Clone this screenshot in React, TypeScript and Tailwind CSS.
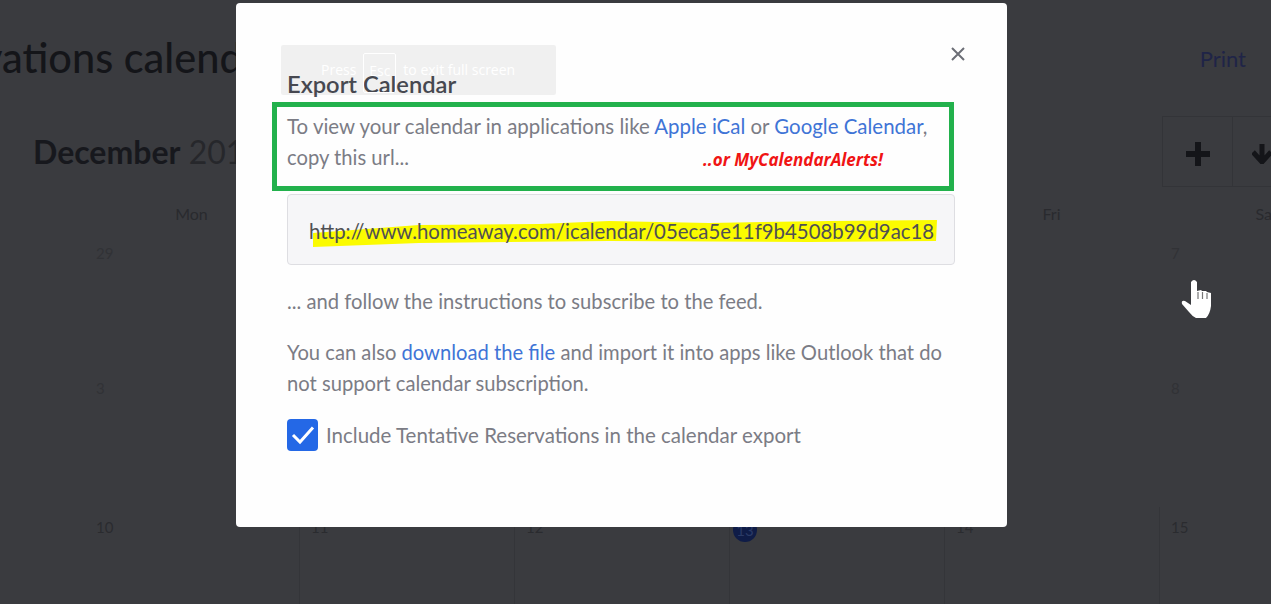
const lato = "font-['Lato','Liberation_Sans',sans-serif]";

const rows: { h: string; line: string; text: string; cells: string[] }[] = [
  { h: "h-[135px]", line: "border-transparent", text: "text-[#313236]", cells: ["29", "", "", "", "", "7"] },
  { h: "h-[139px]", line: "border-transparent", text: "text-[#313236]", cells: ["3", "", "", "", "", "8"] },
  { h: "h-[140px]", line: "border-[#343539] first:border-transparent", text: "text-[#2a2b2f]", cells: ["10", "11", "12", "13", "14", "15"] },
];

function Backdrop() {
  return (
    <div className={`w-[1271px] h-[604px] overflow-hidden bg-[#3a3b3f] ${lato}`}>
      <div className="flex h-[116px] items-center justify-between">
        <div className="ml-[-121px] whitespace-nowrap text-[41.5px] leading-none font-medium text-[#141519]">
          Reservations calendar
        </div>
        <div className="mr-[25px] text-[22px] text-[#1f2447]">Print</div>
      </div>
      <div className="flex h-[71px] justify-between">
        <div className="whitespace-nowrap pl-[33px] text-[32px] leading-[71px]">
          <span className="font-bold text-[#17181d]">December</span>{" "}
          <span className="text-[#26272b]">2018</span>
        </div>
        <div className="-mr-[2px] flex w-[111px] flex-none border border-[#333438]">
          <div className="flex w-[70px] flex-none items-center justify-center border-r border-[#333438] pt-[5px]">
            <svg width="26" height="26" viewBox="0 0 26 26">
              <path d="M13 1v24M1 13h24" stroke="#141519" strokeWidth="6" />
            </svg>
          </div>
          <div className="flex flex-1 items-center justify-start pl-[19px] pt-[5px]">
            <svg width="30" height="20" viewBox="0 0 30 20">
              <path d="M10 0v15M1 8l9 10 9-10" stroke="#141519" strokeWidth="5" fill="none" />
            </svg>
          </div>
        </div>
      </div>
      <div className="ml-[84px] grid h-[46px] w-[1290px] grid-cols-6 pt-[17px] text-center text-[16px] leading-[20px] text-[#292a2e]">
        {["Mon", "Tue", "Wed", "Thu", "Fri", "Sat"].map((d) => (
          <div key={d}>{d}</div>
        ))}
      </div>
      {rows.map((r, i) => (
        <div key={i} className={`ml-[84px] grid w-[1290px] grid-cols-6 ${r.h}`}>
          {r.cells.map((c, j) => (
            <div key={j} className={`border-l pl-[11px] pt-[11px] text-[15px] leading-[18px] ${r.line} ${r.text}`}>
              {c === "13" ? (
                <span className="-ml-[8px] flex h-[24px] w-[24px] items-center justify-center rounded-full bg-[#0f1c47] text-[#2a3a66]">
                  {c}
                </span>
              ) : (
                c
              )}
            </div>
          ))}
        </div>
      ))}
    </div>
  );
}

function Modal() {
  return (
    <div className={`absolute left-[236px] top-[3px] h-[524px] w-[771px] rounded-[4px] bg-[#fefefe] pl-[51px] text-[20.2px] leading-[31px] text-[#7b7c85] ${lato}`}>
      <button className="absolute left-[715px] top-[44px] text-[#6c6e76]" aria-label="Close">
        <svg width="14" height="14" viewBox="0 0 14 14" className="block">
          <path d="M1 1l12 12M13 1L1 13" stroke="currentColor" strokeWidth="2" />
        </svg>
      </button>
      <h2 className="h-[99px] pt-[66px] text-[23.7px] leading-[30px] font-semibold text-[#4b4d55]">Export Calendar</h2>
      <div className="relative z-10 -ml-[15px] h-[89px] w-[682px] border-[5px] border-[#22b14c] pl-[10px] pt-[4px]">
        <p className="whitespace-nowrap text-[20.45px]">
          To view your calendar in applications like{" "}
          <span className="text-[#3f74d6]">Apple iCal</span> or{" "}
          <span className="text-[#3f74d6]">Google Calendar</span>,
        </p>
        <div className="flex">
          <span className="w-[416px] flex-none">copy this url...</span>
          <span className="pt-[2px] font-['Open_Sans',sans-serif] text-[17px] font-bold italic text-[#f01414]">..or MyCalendarAlerts!</span>
        </div>
      </div>
      <div className="relative mt-[3px] flex h-[71px] w-[668px] items-center rounded-[4px] border border-[#dedee2] bg-[#f6f6f8] pl-[21px] pr-[19px] pt-[4px]">
        <svg className="absolute left-[21px] top-[22px]" width="628" height="32" viewBox="0 0 628 32">
          <path
            d="M4 16 L110 8 L230 7 L300 4 L400 6 L520 4 L628 3 L627 24 L500 25 L300 24 L110 26 L4 30 Z"
            fill="#fbfb00"
          />
        </svg>
        <div className="relative overflow-hidden whitespace-nowrap text-[20.4px] text-[#4f5054]">
          http://www.homeaway.com/icalendar/05eca5e11f9b4508b99d9ac18
        </div>
      </div>
      <p className="mt-[21px] w-[668px]">... and follow the instructions to subscribe to the feed.</p>
      <p className="mt-[20px] w-[668px]">
        You can also <span className="text-[#3f74d6]">download the file</span> and import it into apps like Outlook that do not support calendar subscription.
      </p>
      <label className="mt-[20px] flex items-center gap-[8px]">
        <span className="flex h-[32px] w-[31px] items-center justify-center rounded-[4px] bg-[#2468e6]">
          <svg width="24" height="20" viewBox="0 0 24 20">
            <path d="M2 10l7 7L22 2.500" stroke="#fff" strokeWidth="3" fill="none" />
          </svg>
        </span>
        <span className="text-[20.5px]">Include Tentative Reservations in the calendar export</span>
      </label>
    </div>
  );
}

function Toast() {
  return (
    <div className="absolute left-[281px] top-[45px] flex h-[50px] w-[275px] items-start rounded-[2px] bg-[#0000000e] pl-[40px] pt-[8px] font-['Open_Sans',sans-serif] text-[14px] leading-[34px] text-white">
      <span>Press</span>
      <span className="ml-[7px] h-[40px] w-[33px] rounded-[2px] border border-white text-center">Esc</span>
      <span className="ml-[7px]">to exit full screen</span>
    </div>
  );
}

function Cursor() {
  return (
    <svg className="absolute left-[1180px] top-[278px]" width="33" height="42" viewBox="0 0 33 42">
      <path
        d="M11 4 Q14 0 17 4 L17 13 L21 12 L22 13 L26 13 L27 14 L31 15 L31 28 Q30 36 26 40 L16 40 Q12 38 9 34 L2 26 Q1 22 5 23 L11 27 Z"
        fill="#fff"
      />
      <path d="M18 14v7M22.500 14v7M27 15v6" stroke="#777" strokeWidth="1.2" />
    </svg>
  );
}

export default function App() {
  return (
    <div className="relative h-[604px] w-[1271px] overflow-hidden">
      <Backdrop />
      <Modal />
      <Toast />
      <Cursor />
    </div>
  );
}
